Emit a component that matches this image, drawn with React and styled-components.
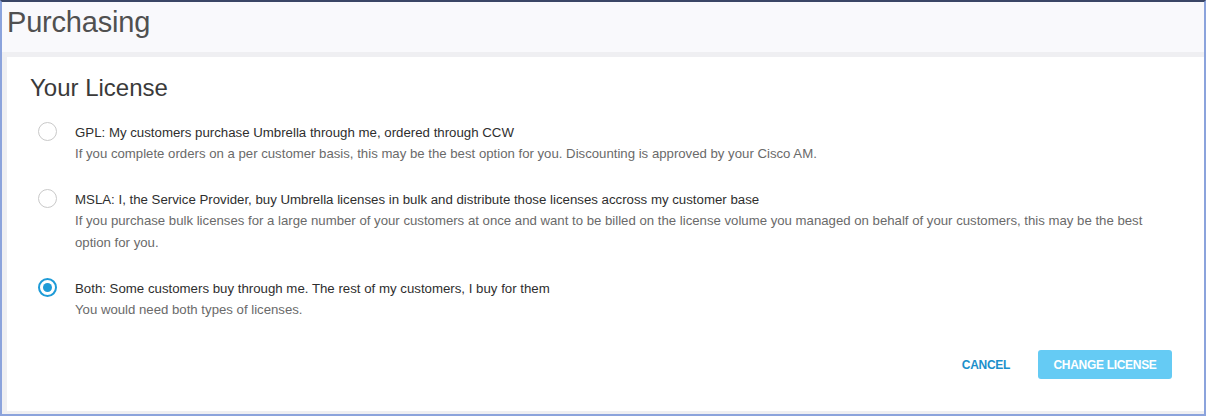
import styled, { createGlobalStyle } from "styled-components";

const GlobalStyle = createGlobalStyle`
  html, body {
    margin: 0;
    padding: 0;
    background: #ffffff;
  }
  * {
    box-sizing: border-box;
  }
`;

const Frame = styled.div`
  width: 1206px;
  height: 416px;
  display: flex;
  flex-direction: column;
  border: 2px solid #8ba3dc;
  border-top: 2px solid #3a4666;
  background: #efeff2;
  font-family: "Liberation Sans", Arial, sans-serif;
`;

const Header = styled.div`
  height: 50px;
  background: #f9f9fc;
  padding: 3px 0 0 5px;
  font-size: 29px;
  font-weight: 300;
  color: #505050;
  line-height: 34px;
  letter-spacing: -0.2px;
`;

const Card = styled.div`
  flex: 1;
  margin: 5px 0 3px 5px;
  background: #ffffff;
  padding: 16px 24px 0 23px;
  display: flex;
  flex-direction: column;
`;

const Title = styled.h2`
  margin: 0 0 19px;
  font-size: 24px;
  font-weight: 400;
  color: #3a3a3a;
  line-height: 30px;
`;

const Options = styled.div`
  display: flex;
  flex-direction: column;
  gap: 24px;
`;

const Option = styled.label`
  display: flex;
  align-items: flex-start;
  gap: 18px;
  padding-left: 8px;
  cursor: pointer;
`;

const Radio = styled.span`
  flex: none;
  width: 19px;
  height: 19px;
  border-radius: 50%;
  border: ${({ checked }) => (checked ? "2px solid #1e9bd7" : "1.5px solid #c9c9c9")};
  display: flex;
  align-items: center;
  justify-content: center;
  &::after {
    content: "";
    display: ${({ checked }) => (checked ? "block" : "none")};
    width: 9px;
    height: 9px;
    border-radius: 50%;
    background: #1e9bd7;
  }
`;

const OptionText = styled.div`
  display: flex;
  flex-direction: column;
  max-width: 1075px;
  padding-top: 1px;
`;

const OptionLabel = styled.div`
  font-size: 13.25px;
  color: #2e2e2e;
  line-height: 20px;
`;

const OptionDesc = styled.div`
  font-size: 13.2px;
  color: #6a6a6a;
  line-height: 22px;
`;

const Actions = styled.div`
  margin-top: auto;
  margin-bottom: 32px;
  display: flex;
  justify-content: flex-end;
  align-items: center;
  gap: 28px;
  padding-right: 8px;
`;

const TextButton = styled.button`
  border: none;
  background: none;
  padding: 0;
  font-family: inherit;
  font-size: 12px;
  font-weight: 700;
  color: #1b8fcb;
  letter-spacing: -0.3px;
  cursor: pointer;
`;

const PrimaryButton = styled.button`
  height: 29px;
  width: 134px;
  border: none;
  border-radius: 3px;
  background: #65cbf4;
  color: #ffffff;
  font-family: inherit;
  font-size: 12px;
  font-weight: 700;
  letter-spacing: -0.3px;
  cursor: default;
`;

const options = [
  {
    label: "GPL: My customers purchase Umbrella through me, ordered through CCW",
    desc: "If you complete orders on a per customer basis, this may be the best option for you. Discounting is approved by your Cisco AM.",
  },
  {
    label:
      "MSLA: I, the Service Provider, buy Umbrella licenses in bulk and distribute those licenses accross my customer base",
    desc: "If you purchase bulk licenses for a large number of your customers at once and want to be billed on the license volume you managed on behalf of your customers, this may be the best option for you.",
  },
  {
    label: "Both: Some customers buy through me. The rest of my customers, I buy for them",
    desc: "You would need both types of licenses.",
    checked: true,
  },
];

const App = () => {
  return (
    <>
      <GlobalStyle />
      <Frame>
        <Header>Purchasing</Header>
        <Card>
          <Title>Your License</Title>
          <Options>
            {options.map((o) => (
              <Option key={o.label}>
                <Radio checked={o.checked} />
                <OptionText>
                  <OptionLabel>{o.label}</OptionLabel>
                  <OptionDesc>{o.desc}</OptionDesc>
                </OptionText>
              </Option>
            ))}
          </Options>
          <Actions>
            <TextButton type="button">CANCEL</TextButton>
            <PrimaryButton type="button">CHANGE LICENSE</PrimaryButton>
          </Actions>
        </Card>
      </Frame>
    </>
  );
};

export default App;
